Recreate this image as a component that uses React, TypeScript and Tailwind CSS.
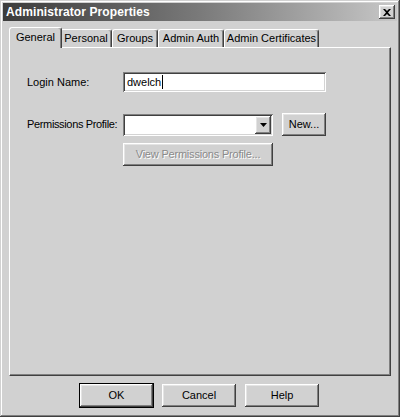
import React from 'react';

const font = "font-['Liberation_Sans',Arial,sans-serif]";
const raised =
  'shadow-[inset_-1px_-1px_0_#404040,inset_1px_1px_0_#ffffff,inset_-2px_-2px_0_#808080,inset_2px_2px_0_#e4e4e4]';
const sunken =
  'shadow-[inset_1px_1px_0_#808080,inset_-1px_-1px_0_#ffffff,inset_2px_2px_0_#404040,inset_-2px_-2px_0_#d4d4d4]';

function Tab({ label, width, active }: { label: string; width: number; active?: boolean }) {
  return (
    <div
      style={{ width }}
      className={
        active
          ? 'relative z-10 -mr-[2px] -ml-[2px] flex h-[21px] -mb-px items-start justify-center rounded-t-[3px] border-l border-t border-r border-l-white border-t-white border-r-[#404040] bg-[#d1d1d1] pt-[2px] shadow-[inset_-1px_0_0_#808080]'
          : 'mt-[2px] flex h-[18px] items-start justify-center rounded-t-[3px] border-l border-t border-r border-l-white border-t-white border-r-[#404040] bg-[#d1d1d1] pt-[1px] shadow-[inset_-1px_0_0_#808080]'
      }
    >
      <span className="whitespace-nowrap text-[11px] leading-[14px] text-black">{label}</span>
    </div>
  );
}

function Button({ label, w, def, disabled }: { label: string; w: number; def?: boolean; disabled?: boolean }) {
  return (
    <div
      style={{ width: w }}
      className={`flex h-[23px] items-center justify-center bg-[#d1d1d1] ${raised} ${def ? 'outline outline-1 outline-black' : ''}`}
    >
      <span
        className={`whitespace-nowrap text-[11px] leading-none ${disabled ? 'tracking-[-0.2px] text-[#8a8a8a] [text-shadow:1px_1px_0_#ffffff]' : 'text-black'}`}
      >
        {label}
      </span>
    </div>
  );
}

export default function App() {
  return (
    <div className={`${font} h-[417px] w-[400px] bg-[#d1d1d1]`}>
      <div className="flex h-full w-full flex-col bg-[#d1d1d1] p-[3px] shadow-[inset_-1px_-1px_0_#404040,inset_1px_1px_0_#d1d1d1,inset_-2px_-2px_0_#808080,inset_2px_2px_0_#ffffff]">
        {/* Title bar */}
        <div className="flex h-[18px] items-center justify-between bg-gradient-to-r from-[#3c3c3c] via-[#7a7a7a] to-[#c8c8c8] pl-[3px] pr-[2px]">
          <span className="text-[12px] font-bold leading-none tracking-[0.1px] text-white">
            Administrator Properties
          </span>
          <div className={`flex h-[14px] w-[16px] items-center justify-center bg-[#d1d1d1] ${raised}`}>
            <svg width="8" height="7" viewBox="0 0 8 7">
              <path d="M0 0h2l2 2 2-2h2L5 3.5 8 7H6L4 5 2 7H0l3-3.5z" fill="#000" />
            </svg>
          </div>
        </div>

        {/* Tabs */}
        <div className="ml-[8px] mt-[6px] flex items-end">
          <Tab label="General" width={53} active />
          <Tab label="Personal" width={52} />
          <Tab label="Groups" width={46} />
          <Tab label="Admin Auth" width={66} />
          <Tab label="Admin Certificates" width={95} />
        </div>

        {/* Panel */}
        <div className="ml-[6px] mr-[6px] h-[329px] border-l border-t border-r border-b border-l-white border-t-white border-r-[#404040] border-b-[#404040] shadow-[inset_-1px_-1px_0_#808080]">
          <div className="flex flex-col pl-[17px] pt-[24px]">
            <div className="flex items-center">
              <span className="w-[96px] whitespace-nowrap text-[11px] text-black">Login Name:</span>
              <div className={`flex h-[20px] w-[203px] items-center bg-white pl-[4px] ${sunken}`}>
                <span className="text-[11px] leading-none text-black">dwelch</span>
                <span className="ml-px h-[14px] w-px bg-black" />
              </div>
            </div>

            <div className="mt-[21px] flex items-center">
              <span className="w-[96px] whitespace-nowrap text-[11px] tracking-[-0.35px] text-black">
                Permissions Profile:
              </span>
              <div className={`flex h-[22px] w-[150px] items-center justify-end bg-white p-[2px] ${sunken}`}>
                <div className={`flex h-[18px] w-[16px] items-center justify-center bg-[#d1d1d1] ${raised}`}>
                  <svg width="7" height="4" viewBox="0 0 7 4">
                    <path d="M0 0h7L3.5 4z" fill="#000" />
                  </svg>
                </div>
              </div>
              <div className="ml-[9px]">
                <Button label="New..." w={44} />
              </div>
            </div>

            <div className="ml-[96px] mt-[7px]">
              <Button label="View Permissions Profile..." w={150} disabled />
            </div>
          </div>
        </div>

        {/* Footer buttons */}
        <div className="mt-[8px] flex gap-[9px] pl-[77px]">
          <Button label="OK" w={73} def />
          <Button label="Cancel" w={74} />
          <Button label="Help" w={74} />
        </div>
      </div>
    </div>
  );
}
